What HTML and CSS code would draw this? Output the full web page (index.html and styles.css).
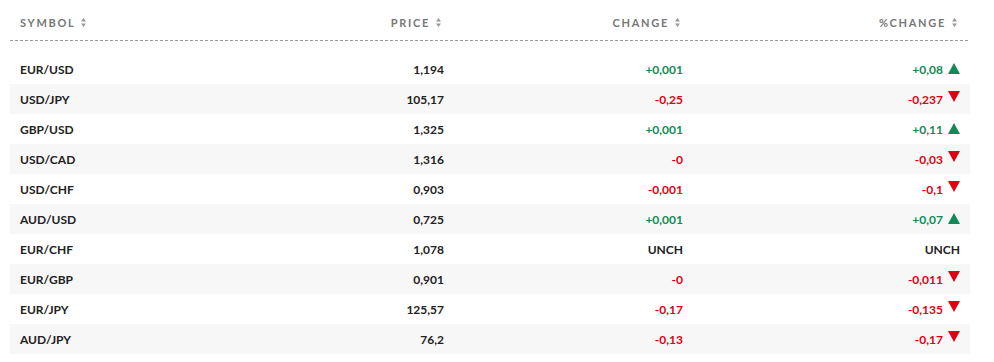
FILE: index.html
```html
<!DOCTYPE html>
<html lang="en">
<head>
    <meta charset="UTF-8">
    <title>Currencies</title>
    <link rel="stylesheet" href="styles.css">
</head>
<body>
    <div class="quotes">
        <div class="quotes-head">
            <div class="col col-symbol"><span>Symbol</span><svg class="sorter" viewBox="0 0 5 9"><path d="M2.5 0L5 3.5H0zM0 5.5h5L2.5 9z"/></svg></div>
            <div class="col col-num"><span>Price</span><svg class="sorter" viewBox="0 0 5 9"><path d="M2.5 0L5 3.5H0zM0 5.5h5L2.5 9z"/></svg></div>
            <div class="col col-num"><span>Change</span><svg class="sorter" viewBox="0 0 5 9"><path d="M2.5 0L5 3.5H0zM0 5.5h5L2.5 9z"/></svg></div>
            <div class="col col-num"><span>%Change</span><svg class="sorter" viewBox="0 0 5 9"><path d="M2.5 0L5 3.5H0zM0 5.5h5L2.5 9z"/></svg></div>
        </div>
        <div class="quotes-body" id="rows"></div>
    </div>
    <script>
        const quotes = [
            ['EUR/USD', '1,194', '+0,001', '+0,08', 'up'],
            ['USD/JPY', '105,17', '-0,25', '-0,237', 'down'],
            ['GBP/USD', '1,325', '+0,001', '+0,11', 'up'],
            ['USD/CAD', '1,316', '-0', '-0,03', 'down'],
            ['USD/CHF', '0,903', '-0,001', '-0,1', 'down'],
            ['AUD/USD', '0,725', '+0,001', '+0,07', 'up'],
            ['EUR/CHF', '1,078', 'UNCH', 'UNCH', ''],
            ['EUR/GBP', '0,901', '-0', '-0,011', 'down'],
            ['EUR/JPY', '125,57', '-0,17', '-0,135', 'down'],
            ['AUD/JPY', '76,2', '-0,13', '-0,17', 'down']
        ];

        const rows = document.getElementById('rows');
        rows.innerHTML = quotes.map(([symbol, price, change, pct, dir]) => `
            <div class="row">
                <div class="col col-symbol">${symbol}</div>
                <div class="col col-num">${price}</div>
                <div class="col col-num ${dir}">${change}</div>
                <div class="col col-num ${dir}">${pct}${dir ? `<i class="arrow arrow-${dir}"></i>` : ''}</div>
            </div>
        `).join('');
    </script>
</body>
</html>
```

FILE: styles.css
```css
:root {
    --text-dark: #222;
    --text-muted: #777;
    --green: #128a55;
    --red: #e0000f;
    --stripe: #f7f7f7;
}

body {
    margin: 0;
    font-family: Lato, 'Open Sans', sans-serif;
    background: #fff;
    color: var(--text-dark);
}

.quotes {
    width: 960px;
    margin-left: 10px;
}

.quotes-head,
.row {
    display: grid;
    grid-template-columns: 1fr 240px 239px 277px;
}

.quotes-head {
    height: 41px;
    align-items: center;
    padding-top: 4px;
    box-sizing: border-box;
    background: repeating-linear-gradient(to right, #9a9a9a 0 3px, transparent 3px 5px) bottom / 100% 1px no-repeat;
}

.quotes-head .col {
    font-size: 11px;
    font-weight: 700;
    letter-spacing: 1.7px;
    text-transform: uppercase;
    color: var(--text-muted);
    padding-right: 13px;
}

.col {
    display: flex;
    align-items: center;
    padding: 0 10px;
}

.col-num {
    justify-content: flex-end;
}

.sorter {
    width: 5px;
    height: 9px;
    margin-left: 6px;
    margin-top: -1px;
    fill: #999;
}

.quotes-body {
    margin-top: 13px;
}

.row {
    height: 30px;
    font-size: 12px;
    font-weight: 700;
}

.row:nth-child(even) {
    background: var(--stripe);
}

.up {
    color: var(--green);
}

.down {
    color: var(--red);
}

.arrow {
    display: inline-block;
    width: 0;
    height: 0;
    margin-left: 5px;
    border-left: 6px solid transparent;
    border-right: 6px solid transparent;
}

.arrow-up {
    border-bottom: 11px solid var(--green);
    margin-top: -2px;
}

.arrow-down {
    border-top: 11px solid var(--red);
    margin-top: -6px;
}
```
